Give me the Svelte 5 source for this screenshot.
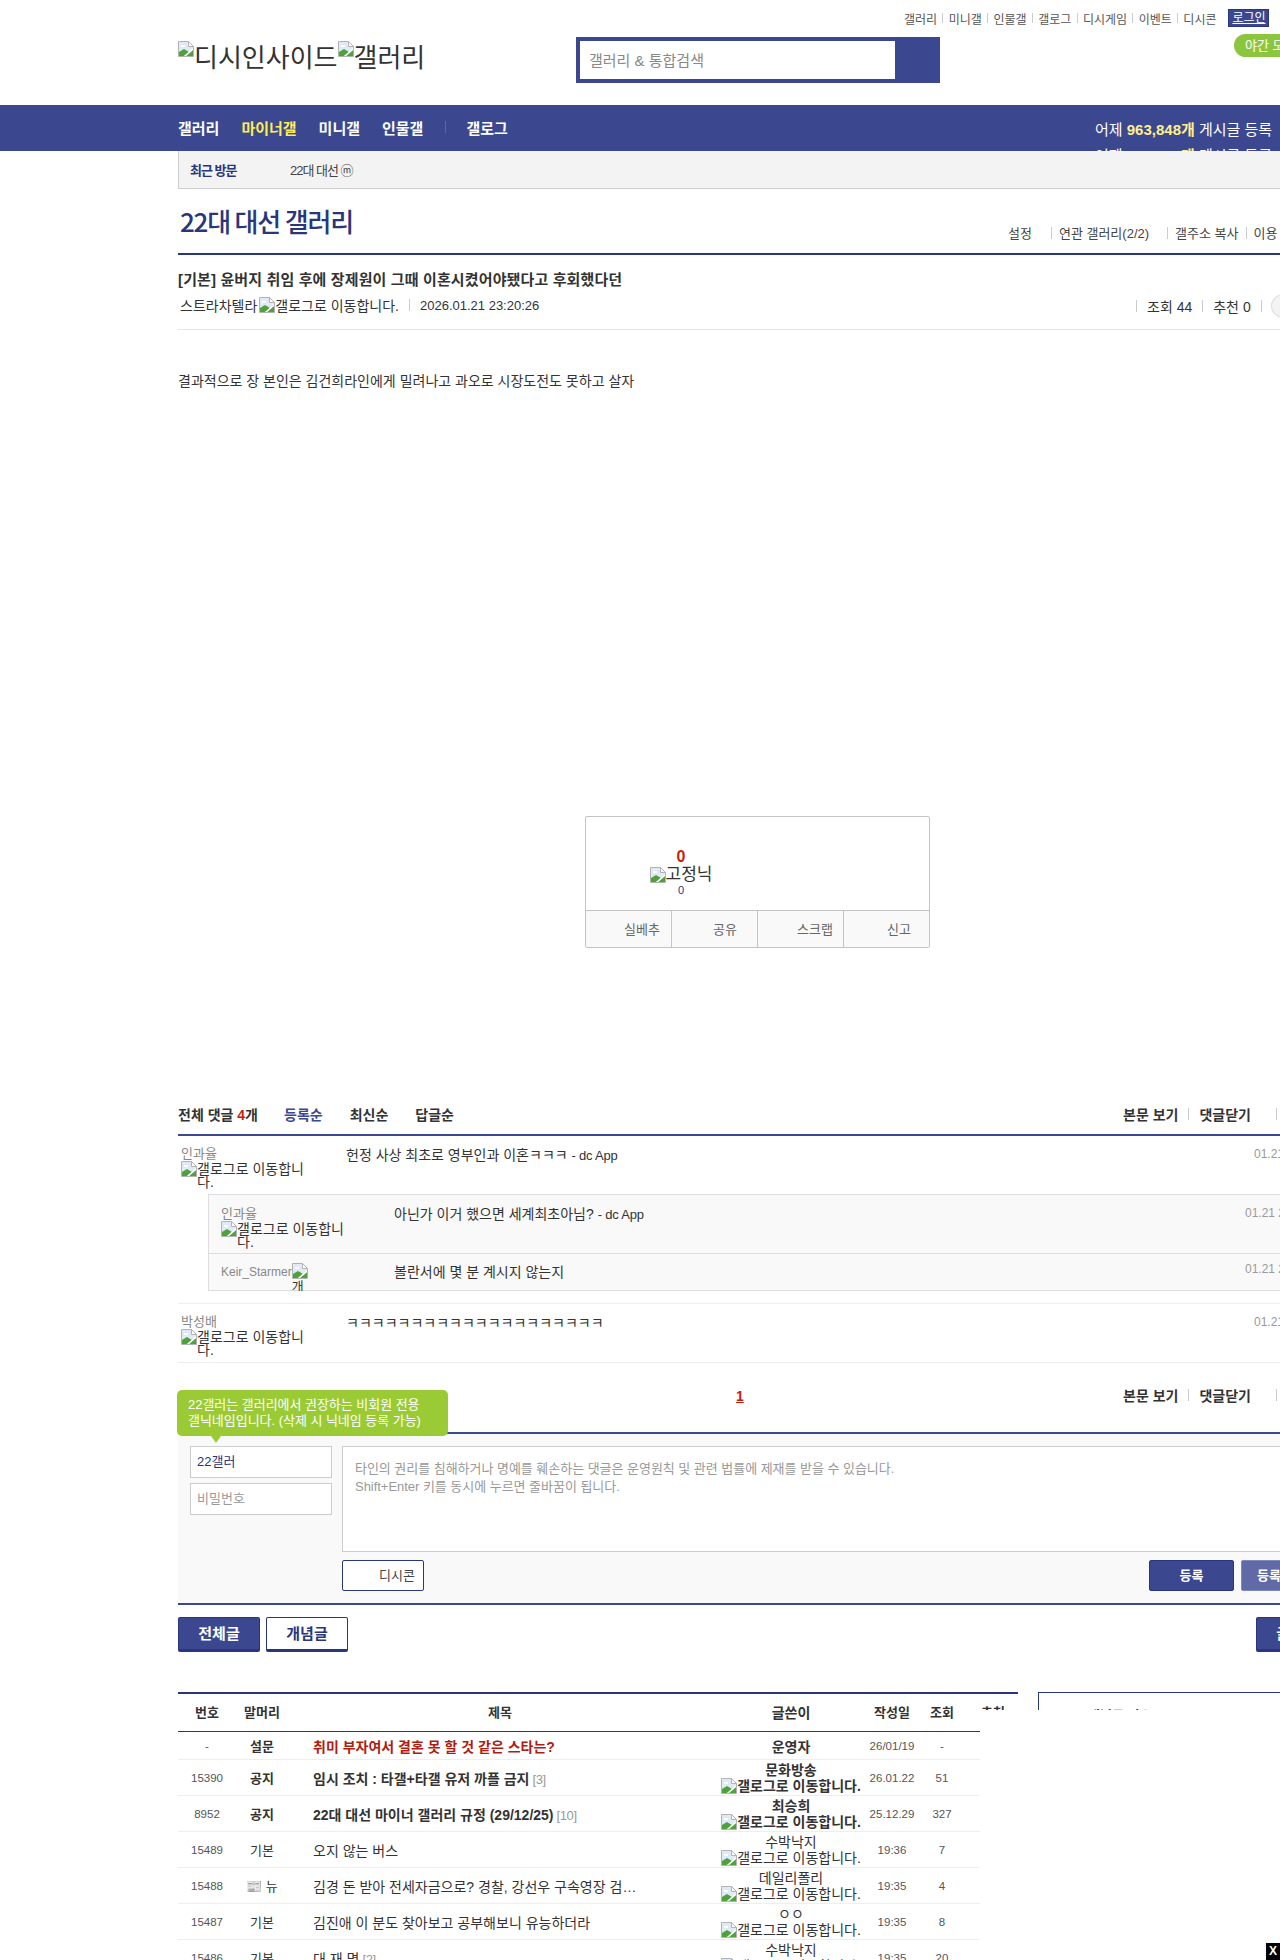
<script>
  const topLinks = ['갤러리','미니갤','인물갤','갤로그','디시게임','이벤트','디시콘'];
  const rows = [
    {no:'15390',head:'공지',hb:true,title:'임시 조치 : 타갤+타갤 유저 까플 금지',tb:true,rep:'[3]',name:'문화방송',nb:true,date:'26.01.22',v:'51'},
    {no:'8952',head:'공지',hb:true,title:'22대 대선 마이너 갤러리 규정 (29/12/25)',tb:true,rep:'[10]',name:'최승희',nb:true,date:'25.12.29',v:'327'},
    {no:'15489',head:'기본',title:'오지 않는 버스',name:'수박낙지',date:'19:36',v:'7'},
    {no:'15488',head:'📰 뉴',title:'김경 돈 받아 전세자금으로? 경찰, 강선우 구속영장 검…',name:'데일리폴리',date:'19:35',v:'4'},
    {no:'15487',head:'기본',title:'김진애 이 분도 찾아보고 공부해보니 유능하더라',name:'ㅇㅇ',date:'19:35',v:'8'},
    {no:'15486',head:'기본',title:'대 재 명',rep:'[2]',name:'수박낙지',date:'19:35',v:'20'}
  ];
</script>

{#snippet broken()}
  <svg class="bk" width="16" height="16" viewBox="0 0 16 16">
    <path d="M0.5 0.5H10.5L15.5 5.5V15.5H0.5Z" fill="#dfe9f7" stroke="#b3b3b3"/>
    <path d="M10.5 0.5V5.5H15.5Z" fill="#fff" stroke="#b3b3b3"/>
    <path d="M3 4h4v2H3z" fill="#fff"/>
    <path d="M1 15V11L6 8L11 11L6 15Z" fill="#4fa13a"/>
    <path d="M8 15L15 9V15Z" fill="#4fa13a"/>
    <path d="M6 15L15 7V9L8 15Z" fill="#fff"/>
  </svg>
{/snippet}

{#snippet altline(w)}
  <span class="altimg" style="width:{w}px">{@render broken()}<span class="alttxt">갤로그로 이동합니다.</span></span>
{/snippet}

<div class="page">
  <header class="hd">
    <div class="toplinks">
      {#each topLinks as l, i}
        {#if i}<i class="tsep"></i>{/if}<span>{l}</span>
      {/each}
      <span class="login">로그인</span>
    </div>
    <div class="hdmain">
      <div class="logo">{@render broken()}<span>디시인사이드</span>{@render broken()}<span>갤러리</span></div>
      <div class="search"><div class="sinput">갤러리 &amp; 통합검색</div></div>
      <div class="pill">야간 모드</div>
    </div>
  </header>

  <nav class="gnb">
    <span>갤러리</span><span class="y">마이너갤</span><span>미니갤</span><span>인물갤</span><i class="nsep"></i><span>갤로그</span>
    <div class="ticker">
      <div>어제 <b>963,848개</b> 게시글 등록</div>
      <div>어제 <b>829,848개</b> 게시글 등록</div>
    </div>
  </nav>

  <main class="wrap">
    <div class="recent"><b>최근 방문</b><span>22대 대선 ⓜ</span></div>

    <div class="galhead">
      <h2>22대 대선 갤러리</h2>
      <div class="gallinks">
        <span class="gl1">설정</span><i></i><span class="gl2">연관 갤러리(2/2)</span><i></i><span class="gl3">갤주소 복사</span><i></i><span>이용</span>
      </div>
    </div>

    <section class="post">
      <h3>[기본] 윤버지 취임 후에 장제원이 그때 이혼시켰어야됐다고 후회했다던</h3>
      <div class="meta">
        <span class="au">스트라차텔라</span>{@render broken()}<span class="al">갤로그로 이동합니다.</span><i class="ms"></i><span class="dt">2026.01.21 23:20:26</span>
        <span class="mr"><i class="ms"></i><span>조회 44</span><i class="ms"></i><span>추천 0</span><i class="ms"></i><span class="circle"></span></span>
      </div>
    </section>

    <p class="body">결과적으로 장 본인은 김건희라인에게 밀려나고 과오로 시장도전도 못하고 살자</p>

    <div class="recbox">
      <div class="rectop">
        <div class="reccol">
          <b class="r0">0</b>
          <div class="fix">{@render broken()}<span>고정닉</span></div>
          <span class="b0">0</span>
        </div>
      </div>
      <div class="recbtm">
        <div class="c1">실베추</div><div class="c2">공유</div><div class="c3">스크랩</div><div class="c4">신고</div>
      </div>
    </div>

    <div class="cmhead">
      <b class="tot">전체 댓글 <em>4</em>개</b><b class="on">등록순</b><b>최신순</b><b>답글순</b>
      <div class="cmr"><b>본문 보기</b><i></i><b>댓글닫기</b><i class="far"></i></div>
    </div>

    <div class="cm first">
      <div class="nickcol">
        <div class="nick">인과율</div>
        {@render altline(125)}
      </div>
      <div class="txt">헌정 사상 최초로 영부인과 이혼ㅋㅋㅋ <span class="app">- dc App</span></div>
      <div class="date">01.21 23:31:02</div>
    </div>

    <div class="reply">
      <div class="rp a">
        <div class="nickcol w2">
          <div class="nick">인과율</div>
          {@render altline(125)}
        </div>
        <div class="txt">아닌가 이거 했으면 세계최초아님? <span class="app">- dc App</span></div>
        <div class="date">01.21 23:34:11</div>
      </div>
      <div class="rp b">
        <div class="kn"><span class="nick">Keir_Starmer</span><span class="altimg small">{@render broken()}<span class="alttxt clip">개</span></span></div>
        <div class="txt">볼란서에 몇 분 계시지 않는지</div>
        <div class="date">01.21 23:40:52</div>
      </div>
    </div>

    <div class="cm last">
      <div class="nickcol">
        <div class="nick">박성배</div>
        {@render altline(125)}
      </div>
      <div class="txt">ㅋㅋㅋㅋㅋㅋㅋㅋㅋㅋㅋㅋㅋㅋㅋㅋㅋㅋㅋㅋ</div>
      <div class="date">01.21 23:52:44</div>
    </div>

    <div class="pager">
      <a class="pg">1</a>
      <div class="cmr"><b>본문 보기</b><i></i><b>댓글닫기</b><i class="far"></i></div>
      <div class="tip">22갤러는 갤러리에서 권장하는 비회원 전용<br>갤닉네임입니다. (삭제 시 닉네임 등록 가능)</div>
    </div>

    <div class="write">
      <div class="wl">
        <div class="inp nm">22갤러</div>
        <div class="inp pw">비밀번호</div>
      </div>
      <div class="wr">
        <div class="ta">타인의 권리를 침해하거나 명예를 훼손하는 댓글은 운영원칙 및 관련 법률에 제재를 받을 수 있습니다.<br>Shift+Enter 키를 동시에 누르면 줄바꿈이 됩니다.</div>
        <div class="wbtns">
          <div class="dccon">디시콘</div>
          <div class="sub">등록</div>
          <div class="sub alt">등록+추천</div>
        </div>
      </div>
    </div>

    <div class="tabs">
      <div class="tb on">전체글</div><div class="tb">개념글</div><div class="tb on wr2">글쓰기</div>
    </div>

    <div class="listarea">
      <div class="listcol">
        <div class="lh">
          <b class="c-no">번호</b><b class="c-h">말머리</b><b class="c-t cen">제목</b><b class="c-w">글쓴이</b><b class="c-d">작성일</b><b class="c-v">조회</b><b class="c-r">추천</b>
        </div>
        <div class="lr first-r">
          <span class="c-no">-</span><b class="c-h">설문</b><b class="c-t red">취미 부자여서 결혼 못 할 것 같은 스타는?</b><b class="c-w">운영자</b><span class="c-d">26/01/19</span><span class="c-v">-</span>
        </div>
        {#each rows as r}
          <div class="lr">
            <span class="c-no">{r.no}</span>
            <span class="c-h" class:hb={r.hb}>{r.head}</span>
            <span class="c-t" class:tb2={r.tb}><span class="ttl">{r.title}</span>{#if r.rep}<span class="rep">{r.rep}</span>{/if}</span>
            <span class="c-w" class:wb={r.nb}>
              <span class="wn">{r.name}</span>
              <span class="wa">{@render broken()}<span>갤로그로 이동합니다.</span></span>
            </span>
            <span class="c-d">{r.date}</span>
            <span class="c-v">{r.v}</span>
          </div>
        {/each}
      </div>
      <div class="sidebox"><b>개념글 리스트</b></div>
    </div>
  </main>

  <div class="veil"></div>
  <div class="closex">X</div>
</div>

<style>
  :global(body){margin:0;background:#fff}
  .page{position:relative;width:1280px;height:1960px;overflow:hidden;background:#fff;color:#333;font-family:"Liberation Sans","Noto Sans CJK KR",sans-serif;font-size:14px}
  .page i{display:block;font-style:normal}
  .bk{display:block;flex:none}

  .hd{height:105px}
  .toplinks{display:flex;align-items:center;height:18px;padding:9px 0 0 904px;font-size:12px;color:#555;white-space:nowrap}
  .tsep{width:1px;height:10px;background:#ccc;margin:0 5.3px}
  .login{margin-left:12px;width:41px;height:18px;line-height:16px;text-align:center;background:#3b4890;color:#fff;border:1px solid #29367c;box-sizing:border-box;text-decoration:underline}
  .hdmain{display:flex;align-items:flex-start;padding:10px 0 0 178px}
  .logo{display:flex;align-items:center;height:30px;margin-top:3px;width:398px;flex:none;font-size:26px;color:#333;white-space:nowrap}
  .logo span{line-height:30px;margin-top:6px}
  .logo .bk{margin-top:-12px}
  .search{width:364px;height:46px;flex:none;box-sizing:border-box;background:#3b4890;padding:4px 45px 4px 4px}
  .sinput{height:38px;background:#fff;line-height:40px;padding-left:9px;font-size:15px;color:#888}
  .pill{margin-left:294px;flex:none;width:70px;height:23px;border-radius:12px 0 0 12px;background:#8cc63f;color:#fff;font-size:13px;line-height:23px;padding-left:11px;white-space:nowrap;margin-top:-3px}

  .gnb{position:relative;display:flex;align-items:center;height:46px;background:#3b4890;padding:0 0 2px 178px;color:#fff;font-weight:bold;font-size:15px;box-sizing:border-box;overflow:hidden}
  .gnb>span{margin-right:22px}
  .gnb .y{color:#ffed52}
  .nsep{width:1px;height:12px;background:#5d69a8;margin-right:20px}
  .ticker{margin-left:auto;margin-right:-100px;width:285px;height:46px;padding-top:16px;box-sizing:border-box;font-weight:normal;line-height:19px;flex:none}
  .ticker div{height:26px;white-space:nowrap}
  .ticker b{color:#ffef8f}

  .wrap{width:1160px;margin-left:178px}
  .recent{height:38px;box-sizing:border-box;background:#f3f3f3;border:1px solid #ccc;border-top:0;border-right:0;display:flex;align-items:center;font-size:13px;letter-spacing:-1px;padding-left:11px}
  .recent b{color:#29367c;width:100px}
  .recent span{color:#444}

  .galhead{height:64px;border-bottom:2px solid #29367c;position:relative;display:flex;justify-content:space-between;align-items:flex-start}
  .galhead h2{margin:15px 0 0 2px;font-family:"Noto Sans CJK KR",sans-serif;font-size:26px;font-weight:500;line-height:34px;letter-spacing:-1.2px;color:#29367c}
  .gallinks{display:flex;align-items:center;font-size:13px;color:#444;position:absolute;left:830px;top:34px;white-space:nowrap}
  .gallinks i{width:1px;height:12px;background:#ccc}
  .gl1{margin-right:19px}.gl2{margin:0 18px 0 7px}.gl3{margin:0 7px}
  .gallinks span:last-child{margin-left:7px}

  .post{height:74px;border-bottom:1px solid #e5e5e5}
  .post h3{margin:0;padding-top:15px;font-size:15px;line-height:20px;font-weight:bold;letter-spacing:.13px;color:#333;white-space:nowrap}
  .meta{display:flex;align-items:center;height:24px;margin-top:3px;padding-left:2px;font-size:14px;color:#333;white-space:nowrap}
  .meta>.bk{margin-left:2px}
  .ms{width:1px;height:12px;background:#ccc}
  .al{color:#333}
  .dt{margin-left:10px;font-size:13px;}
  .meta>.ms{margin-left:10px}
  .mr{display:flex;align-items:center;position:absolute;left:1136px;margin-top:2px}
  .mr span{margin:0 10px}
  .circle{display:block;width:26px;height:24px;border-radius:50%;background:#f3f3f3;border:1px solid #ddd;box-sizing:border-box;margin:0 0 0 9px!important}

  .body{margin:43px 0 0;font-size:14px;line-height:16px;color:#333}

  .recbox{width:345px;height:132px;margin:427px 0 0 407px;border:1px solid #c4c4c4;border-radius:2px;box-sizing:border-box;background:#fff;overflow:hidden}
  .rectop{height:93px;border-bottom:1px solid #c4c4c4;position:relative}
  .reccol{width:190px;text-align:center;padding-top:30px;display:flex;flex-direction:column;align-items:center;margin-left:0}
  .r0{color:#c91d0c;font-size:16px;line-height:20px}
  .fix{display:flex;align-items:center;font-size:17px;line-height:18px;color:#333;margin-top:-1px}
  .b0{font-size:11px;line-height:16px;color:#29367c;font-weight:normal;margin-top:-2px}
  .recbtm{display:flex;height:37px;background:#f9f9f9;font-size:13px;color:#666;line-height:37px}
  .recbtm div{width:86px;border-right:1px solid #c4c4c4;box-sizing:border-box;text-align:right;flex:none}
  .recbtm div:last-child{border-right:0;flex:1}
  .c1{padding-right:11px}.c2{padding-right:20px}.c3{padding-right:10px}.c4{padding-right:18px}

  .cmhead{display:flex;align-items:center;height:34px;padding-bottom:3px;margin-top:149px;border-bottom:2px solid #3b4890;position:relative;font-size:14px;color:#333}
  .cmhead>b{margin-right:27px}
  .cmhead>.tot{margin-right:26px}
  .cmhead em{font-style:normal;color:#c91d0c}
  .on{color:#3b4890}
  .cmr{position:absolute;left:945px;display:flex;align-items:center;top:0;height:34px;white-space:nowrap}
  .cmr i{width:1px;height:12px;background:#ccc;margin:0 10px}
  .cmr .far{margin-left:25px}

  .cm{position:relative;display:flex;align-items:flex-start;box-sizing:border-box}
  .cm.first{height:58px;padding-top:11px}
  .cm.last{height:60px;padding-top:11px;border-top:1px solid #eee;border-bottom:1px solid #eee;margin-top:12px}
  .nickcol{width:168px;padding-left:3px;box-sizing:border-box;flex:none}
  .nick{font-size:13px;color:#888;line-height:13px}
  .altimg{display:flex;color:#333;font-size:14px;line-height:13px;margin-top:1px}
  .alttxt{display:block;width:109px;text-align:left;margin-top:2px;word-break:break-all}
  .altimg.small{width:16px;display:block;height:28px;overflow:hidden;margin:0}
  .alttxt.clip{width:16px;height:13px;margin-top:1px;text-align:left;font-size:13px}
  .txt{font-size:14px;line-height:16px;color:#333;white-space:nowrap;margin-top:0}
  .app{font-size:13px;letter-spacing:-.2px}
  .date{position:absolute;left:1076px;top:11px;font-size:12px;color:#999;white-space:nowrap;line-height:14px}

  .reply{margin-left:30px;border:1px solid #ddd;background:#f9f9f9;width:1130px;height:97px;box-sizing:border-box}
  .rp{position:relative;display:flex;align-items:flex-start;box-sizing:border-box}
  .rp.a{height:59px;border-bottom:1px solid #ddd;padding-top:12px}
  .rp.a .txt{margin-top:-1px;margin-left:1px}
  .rp.b{height:36px;padding-top:0}
  .w2{width:184px;padding-left:12px}
  .rp.a .date{left:1036px;top:11px}
  .rp.b .date{left:1036px;top:8px}
  .kn{width:184px;padding-left:12px;display:flex;align-items:flex-start;box-sizing:border-box;flex:none;padding-top:9px}
  .kn .nick{line-height:18px;font-size:12px}
  .rp.b .txt{padding-top:10px;margin-left:1px}

  .pager{position:relative;height:71px;box-sizing:border-box;border-bottom:2px solid #3b4890}
  .pg{position:absolute;left:558px;top:25px;font-size:14px;line-height:16px;font-weight:bold;color:#c91d0c;text-decoration:underline}
  .pager .cmr{top:15px;left:945px;font-size:14px}
  .tip{position:absolute;left:-1px;top:27px;width:271px;height:46px;box-sizing:border-box;padding:7px 11px;background:#9acb34;border-radius:5px;color:#fff;font-size:13px;letter-spacing:-.03px;line-height:16px;white-space:nowrap;z-index:2}
  .tip::after{content:"";position:absolute;left:34px;top:46px;border:5px solid transparent;border-top:7px solid #9acb34;border-bottom:0}

  .write{display:flex;height:171px;background:#f9f9f9;padding:12px 0 0 12px;box-sizing:border-box;border-bottom:2px solid #3b4890}
  .wl{width:152px;flex:none}
  .inp{width:142px;height:32px;box-sizing:border-box;border:1px solid #ccc;background:#fff;line-height:30px;padding-left:6px;font-size:13px;margin-bottom:5px}
  .nm{color:#29367c}.pw{color:#999}
  .wr{width:984px}
  .ta{height:106px;box-sizing:border-box;border:1px solid #ccc;border-right:0;background:#fff;padding:13px 12px;font-size:13px;letter-spacing:-.03px;line-height:18px;color:#999;white-space:nowrap}
  .wbtns{display:flex;margin-top:8px;height:31px;align-items:stretch}
  .dccon{width:82px;box-sizing:border-box;border:1px solid #29367c;border-radius:2px;background:#fff;text-align:right;padding-right:8px;font-size:13px;line-height:29px;color:#444}
  .sub{width:85px;margin-left:auto;background:#3b4890;border:1px solid #29367c;border-radius:2px;box-sizing:border-box;color:#fff;text-align:center;font-size:13px;font-weight:bold;line-height:29px;flex:none;white-space:nowrap;overflow:hidden}
  .sub.alt{margin-left:7px;background:#6169a6;text-align:left;padding-left:15px;border-color:#8088bb}

  .tabs{display:flex;gap:6px;margin-top:12px;height:35px}
  .tb{width:82px;height:35px;flex:none;box-sizing:border-box;border:1px solid #29367c;border-bottom-width:3px;border-radius:2px;background:#fff;color:#29367c;font-weight:bold;font-size:15px;text-align:center;line-height:31px}
  .tb.on{background:#3b4890;color:#fff}
  .wr2{margin-left:902px}

  .listarea{display:flex;margin-top:40px;align-items:flex-start}
  .listcol{width:840px;flex:none;border-top:2px solid #29367c;box-sizing:border-box}
  .sidebox{margin-left:20px;width:300px;flex:none;height:60px;border:1px solid #29367c;box-sizing:border-box;padding:15px 0 0 49px;font-size:13px;line-height:16px}
  .lh,.lr{display:flex;align-items:center;white-space:nowrap;box-sizing:border-box}
  .lh{height:38px;border-bottom:1px solid #29367c;font-size:13px;color:#333;width:840px;padding-bottom:2px}
  .lr{height:36px;border-bottom:1px solid #eee;width:802px;font-size:14px;color:#333}
  .first-r{height:28px}
  .lr>span:first-child,.lr .c-d,.lr .c-v{font-size:11.5px;color:#555}
  .c-no{width:58px;text-align:center;flex:none}
  .c-h{width:52px;text-align:center;flex:none;font-size:13px}
  .hb{font-weight:bold}
  .c-t{width:434px;flex:none;padding-left:25px;box-sizing:border-box;overflow:hidden}
  .lh .c-t{text-align:center;padding:0 10px 0 0}
  .tb2{font-weight:bold}
  .red{color:#b01c10;font-weight:bold}
  .rep{color:#999;font-size:13px;letter-spacing:-.4px;margin-left:3px;font-weight:normal}
  .c-w{width:138px;text-align:center;flex:none;display:flex;flex-direction:column;align-items:center;font-size:14px}
  .wn{line-height:16px;height:16px}
  .wa{display:flex;align-items:center;line-height:16px;font-size:14px;white-space:nowrap}
  .wb{font-weight:bold}
  .c-d{width:64px;text-align:center;flex:none}
  .c-v{width:36px;text-align:center;flex:none}
  .c-r{width:66px;text-align:center;flex:none}

  .veil{position:absolute;left:980px;top:1710px;right:0;bottom:0;background:#fff}
  .closex{position:absolute;right:0;bottom:0;width:14px;height:17px;background:#000;color:#fff;font-weight:bold;font-size:12px;line-height:17px;text-align:center}
</style>
